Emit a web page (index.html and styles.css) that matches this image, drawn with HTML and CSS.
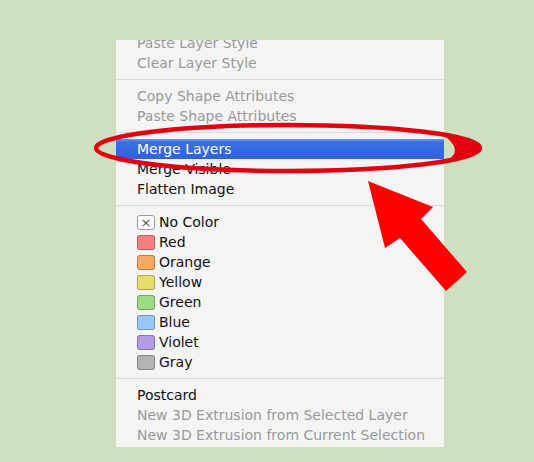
FILE: index.html
```html
<!DOCTYPE html>
<html>
<head>
<meta charset="utf-8">
<link rel="stylesheet" href="styles.css">
</head>
<body>
<div class="stage">
  <div class="menu">
    <div class="list">
      <div class="item dis">Paste Layer Style</div>
      <div class="item dis">Clear Layer Style</div>
      <div class="sep"></div>
      <div class="item dis">Copy Shape Attributes</div>
      <div class="item dis">Paste Shape Attributes</div>
      <div class="sep"></div>
      <div class="item sel">Merge Layers</div>
      <div class="item">Merge Visible</div>
      <div class="item">Flatten Image</div>
      <div class="sep"></div>
      <div class="item color"><span class="sw none">×</span>No Color</div>
      <div class="item color"><span class="sw red"></span>Red</div>
      <div class="item color"><span class="sw orange"></span>Orange</div>
      <div class="item color"><span class="sw yellow"></span>Yellow</div>
      <div class="item color"><span class="sw green"></span>Green</div>
      <div class="item color"><span class="sw blue"></span>Blue</div>
      <div class="item color"><span class="sw violet"></span>Violet</div>
      <div class="item color"><span class="sw gray"></span>Gray</div>
      <div class="sep"></div>
      <div class="item">Postcard</div>
      <div class="item dis">New 3D Extrusion from Selected Layer</div>
      <div class="item dis">New 3D Extrusion from Current Selection</div>
    </div>
  </div>
  <svg class="marks" width="534" height="462" viewBox="0 0 534 462">
    <ellipse cx="288" cy="148" rx="192" ry="23" fill="none" stroke="#e3000f" stroke-width="4.5"/>
    <path d="M440 133 Q486 142 481 149 Q476 158 440 164 Q470 152 440 133 Z" fill="#e3000f"/>
    <polygon points="368,181 433,207 421,219 467,272 446,291 400,238 385,248" fill="#ff0000"/>
  </svg>
</div>
</body>
</html>
```

FILE: styles.css
```css
html, body {
  margin: 0;
  padding: 0;
}
body {
  background: #cfe0c0;
  width: 534px;
  height: 462px;
  overflow: hidden;
  font-family: "DejaVu Sans", "Liberation Sans", sans-serif;
}
.stage {
  position: relative;
  width: 534px;
  height: 462px;
  padding-top: 40px;
  box-sizing: border-box;
}
.menu {
  margin-left: 116px;
  width: 328px;
  height: 407px;
  background: #f4f4f4;
  overflow: hidden;
}
.list {
  display: flex;
  flex-direction: column;
  margin-top: -7px;
}
.item {
  height: 20px;
  line-height: 20px;
  padding-left: 21px;
  font-size: 14px;
  color: #111111;
  white-space: nowrap;
}
.item.dis {
  color: #999999;
}
.item.sel {
  color: #ffffff;
  background: linear-gradient(#6a98f0, #3a70e4 15%, #2f62de);
}
.item.color {
  display: flex;
  align-items: center;
  gap: 4px;
}
.sw {
  width: 16px;
  height: 13px;
  border-radius: 3px;
  border: 1px solid rgba(0,0,0,0.25);
  display: inline-flex;
  align-items: center;
  justify-content: center;
  flex: none;
}
.sw.none {
  background: #fff;
  border-color: #9a9a9a;
  font-size: 13px;
  color: #555;
  line-height: 13px;
}
.sw.red { background: #f57f7f; }
.sw.orange { background: #f8a860; }
.sw.yellow { background: #e6de6c; }
.sw.green { background: #9edb82; }
.sw.blue { background: #98c7f7; }
.sw.violet { background: #b29ce6; }
.sw.gray { background: #b3b3b3; }
.sep {
  height: 13px;
  display: flex;
  align-items: center;
}
.sep::after {
  content: "";
  display: block;
  width: 100%;
  height: 1px;
  background: #dadada;
}
.marks {
  position: absolute;
  left: 0;
  top: 0;
  pointer-events: none;
}
```
